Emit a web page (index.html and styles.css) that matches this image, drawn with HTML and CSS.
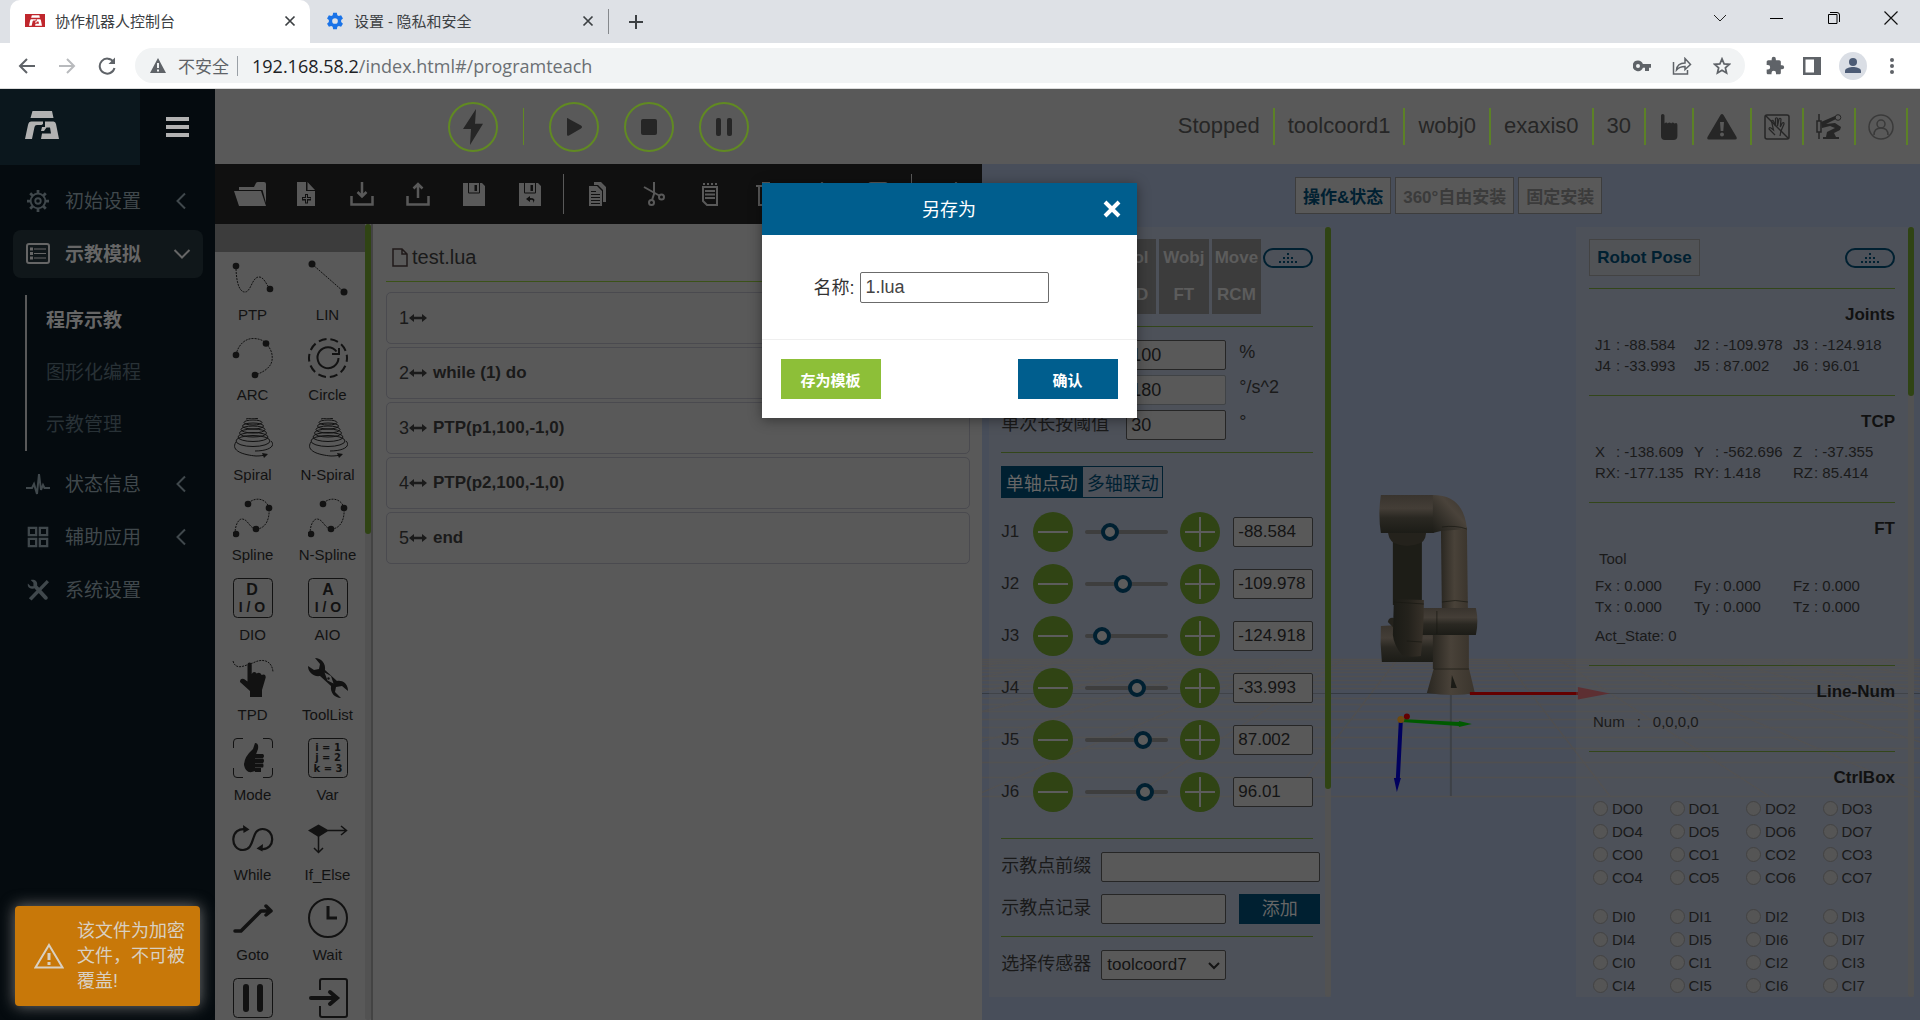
FILE: index.html
```html
<!DOCTYPE html>
<html lang="zh-CN">
<head>
<meta charset="utf-8">
<title>协作机器人控制台</title>
<link rel="stylesheet" href="styles.css">
</head>
<body>
<svg class="defs" aria-hidden="true">
  <symbol id="i-x" viewBox="0 0 12 12"><path d="M1.500 1.500 10.500 10.500M10.500 1.500 1.500 10.500" fill="none" stroke="currentColor" stroke-width="1.700"/></symbol>
  <symbol id="i-left" viewBox="0 0 12 18"><path d="M10 1.500 2.500 9l7.500 7.500" fill="none" stroke="currentColor" stroke-width="2"/></symbol>
  <symbol id="i-logo" viewBox="0 0 34 28"><path d="M7.500 0H27l1.500 7H5.500zM6.500 10.500H18V13l-1.500 1H12c-1.500 0-2.200.8-2.600 2.500L7 28H0l3-14c.6-2.500 1.500-3.500 3.500-3.500zM20 10.500h8.500q2 0 2.500 2.500l3 15H16l1-5.500h9l-1-6h-3.500L19 20h-3l1-4h3z" fill="currentColor"/></symbol>
  <symbol id="i-oval" viewBox="0 0 50 20"><rect x="1" y="1" width="48" height="18" rx="9" fill="none" stroke="currentColor" stroke-width="2"/><path d="M24 6h2M20 10h2m2 0h2m2 0h2M16 14h2m2 0h2m2 0h2m2 0h2m2 0h2" stroke="currentColor" stroke-width="2"/></symbol>
  <symbol id="i-arrow" viewBox="0 0 18 8"><path d="M0 4l5-4v2.700h8V0l5 4-5 4V5.300H5V8z" fill="currentColor"/></symbol>
  <symbol id="i-spiral" viewBox="0 0 40 40"><g fill="none" stroke="currentColor" stroke-width="1"><path d="M13 1c3-1 8-1 12-.3"/><ellipse cx="20" cy="4.500" rx="9" ry="2.500"/><ellipse cx="20" cy="8" rx="10.500" ry="3"/><ellipse cx="20" cy="11.500" rx="12" ry="3.500"/><ellipse cx="20" cy="15" rx="13.500" ry="4"/><ellipse cx="20" cy="19" rx="15" ry="4.500"/><ellipse cx="20" cy="23" rx="17" ry="5.500"/><path d="M3 24c-6 9 8 13 20 14 4 0 8-.5 11-1.500M38 23c5 5-2 10-16 10"/></g><path d="M29 35l6 1-4 4z" fill="currentColor"/></symbol>
  <symbol id="i-spline" viewBox="0 0 40 40"><path d="M2 36C2 28 5 21 9 21c6 0 8 10 14 10C32 31 37 22 36 10 33-1 20-1 15 6" fill="none" stroke="currentColor" stroke-dasharray="2 1"/><g fill="currentColor"><circle cx="3" cy="36" r="3.300"/><circle cx="23" cy="31" r="3.300"/><circle cx="36" cy="10" r="3.300"/><circle cx="15" cy="6" r="3.300"/></g></symbol>
  <symbol id="i-floppy" viewBox="0 0 24 24"><path fill-rule="evenodd" d="M1 1h19l3 3v20H1zm5 0v9c0 1 .5 1.500 1.500 1.500h9c1 0 1.500-.5 1.500-1.500V1h-1v9.500H7V1zM12.500 3v6H15V3z" fill="currentColor"/></symbol>
  <symbol id="i-minus" viewBox="0 0 40 40"><path d="M5 20h30" stroke="currentColor" stroke-width="2"/></symbol>
  <symbol id="i-plus" viewBox="0 0 40 40"><path d="M5 20h30M20 5v30" stroke="currentColor" stroke-width="2"/></symbol>
</svg>

<div class="browser">
  <div class="tabstrip">
    <div class="tab tab-active">
      <span class="favicon"><svg width="13" height="11"><use href="#i-logo"/></svg></span>
      <span class="tab-title">协作机器人控制台</span>
      <button class="plain" aria-label="关闭标签页"><svg width="12" height="12"><use href="#i-x"/></svg></button>
    </div>
    <div class="tab">
      <svg class="gear" width="18" height="18" viewBox="0 0 24 24"><path fill="#1a73e8" fill-rule="evenodd" d="M9.500 1h5l.6 3.200 2 1.100 3-1.100 2.500 4.300-2.400 2.100v2.800l2.400 2.100-2.500 4.300-3-1.100-2 1.100-.6 3.200h-5l-.6-3.200-2-1.100-3 1.100-2.500-4.300 2.400-2.100v-2.800L1.400 8.500l2.500-4.300 3 1.100 2-1.100zM12 8.200a3.800 3.800 0 100 7.600 3.800 3.800 0 000-7.600z"/></svg>
      <span class="tab-title">设置 - 隐私和安全</span>
      <button class="plain" aria-label="关闭标签页"><svg width="12" height="12"><use href="#i-x"/></svg></button>
    </div>
    <span class="tab-sep"></span>
    <button class="plain newtab" aria-label="新标签页"><svg width="16" height="16" viewBox="0 0 16 16"><path d="M8 1v14M1 8h14" stroke="#3c4043" stroke-width="2"/></svg></button>
    <div class="window-controls">
      <button class="plain" aria-label="搜索标签页"><svg width="14" height="14" viewBox="0 0 14 14"><path d="M1 4l6 6 6-6" fill="none" stroke="#222"/></svg></button>
      <button class="plain" aria-label="最小化"><svg width="14" height="14" viewBox="0 0 14 14"><path d="M0 7.500h13" stroke="#000"/></svg></button>
      <button class="plain" aria-label="还原"><svg width="14" height="14" viewBox="0 0 14 14"><path d="M3 1.500h7q2.500 0 2.500 2.500v7M1.500 3.500h8.500v9h-8.500z" fill="none" stroke="#000"/></svg></button>
      <button class="plain" aria-label="关闭"><svg width="14" height="14" viewBox="0 0 14 14"><path d="M.5.5l13 13M13.500.5l-13 13" stroke="#111" stroke-width="1.200"/></svg></button>
    </div>
  </div>
  <div class="addressbar">
    <button class="plain nav" aria-label="后退"><svg width="18" height="16" viewBox="0 0 18 16"><path d="M17 8H2M9 1L2 8l7 7" fill="none" stroke="#5f6368" stroke-width="2"/></svg></button>
    <button class="plain nav" aria-label="前进"><svg width="18" height="16" viewBox="0 0 18 16"><path d="M1 8h15M9 1l7 7-7 7" fill="none" stroke="#b8babd" stroke-width="2"/></svg></button>
    <button class="plain nav" aria-label="重新加载"><svg width="18" height="18" viewBox="0 0 18 18"><path d="M15.500 5A7.500 7.500 0 1016.500 11" fill="none" stroke="#5f6368" stroke-width="2"/><path d="M17 .5V7h-6.500z" fill="#5f6368"/></svg></button>
    <div class="omnibox">
      <svg width="16" height="15" viewBox="0 0 16 15"><path fill-rule="evenodd" fill="#5f6368" d="M8 0l8 15H0zM7 5v5h2V5zm0 6.500v2h2v-2z"/></svg>
      <span class="insecure">不安全</span>
      <span class="omni-sep"></span>
      <span class="url"><b>192.168.58.2</b>/index.html#/programteach</span>
      <span class="omni-icons">
        <svg width="18" height="14" viewBox="0 0 18 14"><path fill="#5f6368" fill-rule="evenodd" d="M5 1.500a5.300 5.300 0 104.900 7.300H12V12h4V8.800h2V5H9.900A5.300 5.300 0 005 1.500zM5 5a2 2 0 110 4 2 2 0 010-4z"/></svg>
        <svg width="20" height="18" viewBox="0 0 20 18"><path d="M1.500 5v12h14v-4M4.500 13C5 8 8 6 13 6V1.500l5.500 6L13 12.500V9.500C9 9.500 7 10 4.500 13z" fill="none" stroke="#5f6368" stroke-width="1.500"/></svg>
        <svg width="18" height="18" viewBox="0 0 24 24"><path d="M12 2.500l2.800 6.600 7.100.6-5.400 4.700 1.600 7-6.100-3.700-6.100 3.700 1.600-7L2.100 9.700l7.100-.6z" fill="none" stroke="#5f6368" stroke-width="2.300"/></svg>
      </span>
    </div>
    <div class="extensions">
      <svg width="20" height="20" viewBox="0 0 24 24"><path fill="#5f6368" d="M20.500 11H19V7c0-1.100-.9-2-2-2h-4V3.500a2.500 2.500 0 00-5 0V5H4c-1.100 0-2 .9-2 2v3.800h1.500a2.700 2.700 0 010 5.400H2V20c0 1.100.9 2 2 2h3.800v-1.500a2.700 2.700 0 015.400 0V22H17c1.100 0 2-.9 2-2v-4h1.500a2.500 2.500 0 000-5z"/></svg>
      <svg width="18" height="18" viewBox="0 0 18 18"><path fill="#5f6368" fill-rule="evenodd" d="M0 0h18v18H0zM2.500 2.500v13h8.500v-13z"/></svg>
      <svg width="28" height="28" viewBox="0 0 28 28"><circle cx="14" cy="14" r="14" fill="#dadee5"/><circle cx="14" cy="10" r="4" fill="#4c5b75"/><path d="M6 21v-2c0-3 5-4 8-4s8 1 8 4v2z" fill="#4c5b75"/></svg>
      <svg width="14" height="18" viewBox="2 0 14 18"><g fill="#5f6368"><circle cx="9" cy="3" r="2"/><circle cx="9" cy="9" r="2"/><circle cx="9" cy="15" r="2"/></g></svg>
    </div>
  </div>
</div>

<div class="app">
  <aside class="sidebar">
    <div class="brand">
      <div class="logo"><svg width="34" height="28"><use href="#i-logo"/></svg></div>
      <button class="plain burger" aria-label="菜单"><svg width="24" height="20" viewBox="0 0 24 20"><path d="M0 2h23M0 10h23M0 18h23" stroke="currentColor" stroke-width="4"/></svg></button>
    </div>
    <nav class="menu">
      <a class="menu-item" href="#init"><svg class="mi" viewBox="0 0 24 24"><circle cx="12" cy="12" r="8" fill="none" stroke="currentColor" stroke-width="2"/><circle cx="12" cy="12" r="3" fill="none" stroke="currentColor" stroke-width="2"/><path d="M12 0v4m0 16v4M0 12h4m16 0h4M3.500 3.500l3 3m11 11l3 3m0-17l-3 3m-11 11l-3 3" stroke="currentColor" stroke-width="3"/></svg><span>初始设置</span><svg width="12" height="18"><use href="#i-left"/></svg></a>
      <a class="menu-item current" href="#teach"><svg class="mi" viewBox="0 0 24 22"><rect x="1" y="1" width="22" height="19" rx="2" fill="none" stroke="currentColor" stroke-width="2"/><path d="M4 6h3m-3 4.500h3M4 15h3" stroke="currentColor" stroke-width="3"/><path d="M8 6h12M8 10.500h12M8 15h12" stroke="currentColor"/></svg><span>示教模拟</span><svg width="18" height="12" viewBox="0 0 18 12"><path d="M1.500 2L9 9.500 16.500 2" fill="none" stroke="currentColor" stroke-width="2"/></svg></a>
      <div class="submenu">
        <a class="on" href="#programteach">程序示教</a>
        <a href="#graph">图形化编程</a>
        <a href="#manage">示教管理</a>
      </div>
      <a class="menu-item" href="#status"><svg class="mi" viewBox="0 0 24 22"><path d="M0 15h6l2-4 3 10L13 1l2 16 2-5 1.500 3H24" fill="none" stroke="currentColor" stroke-width="2"/></svg><span>状态信息</span><svg width="12" height="18"><use href="#i-left"/></svg></a>
      <a class="menu-item" href="#aux"><svg class="mi" viewBox="0 0 24 24"><path d="M2 2h8v8H2zM14 2h8v8h-8zM2 14h8v8H2zM14 14h8v8h-8z" fill="none" stroke="currentColor" stroke-width="2.500"/></svg><span>辅助应用</span><svg width="12" height="18"><use href="#i-left"/></svg></a>
      <a class="menu-item" href="#system"><svg class="mi" viewBox="0 0 24 24"><path d="M21.500 1L24 3.500 5 23.500 2 21zM1 5l3 3h3V4L4 1c4-1 8 1 7 6l11 12c2 2-1 5-3 3L8 10C4 12 0 9 1 5z" fill="currentColor"/></svg><span>系统设置</span></a>
    </nav>
    <div class="toast" role="alert">
      <svg width="30" height="26" viewBox="0 0 30 26"><path d="M15 2l13.500 22.500h-27z" fill="none" stroke="currentColor" stroke-width="2"/><path d="M15 10v7m0 2v3" stroke="currentColor" stroke-width="3"/></svg>
      <p>该文件为加密文件，不可被覆盖!</p>
    </div>
  </aside>

  <div class="main">
    <header class="topbar">
      <div class="run">
        <button class="round" aria-label="使能"><svg width="20" height="36" viewBox="0 0 20 34" preserveAspectRatio="none"><path d="M13 0L0 19h8L7 34 20 14h-8z" fill="currentColor"/></svg></button>
        <span class="run-sep"></span>
        <button class="round" aria-label="开始"><svg width="18" height="18" viewBox="0 0 18 18"><path d="M2 0q1 0 2 1l12 6.500q2 1.500 0 3L4 17.500q-2 1-2-1z" fill="currentColor"/></svg></button>
        <button class="round" aria-label="停止"><svg width="16" height="16"><rect width="16" height="16" rx="2" fill="currentColor"/></svg></button>
        <button class="round" aria-label="暂停"><svg width="16" height="18"><rect width="5" height="18" rx="2" fill="currentColor"/><rect x="11" width="5" height="18" rx="2" fill="currentColor"/></svg></button>
      </div>
      <div class="status">
        <span>Stopped</span><span>toolcoord1</span><span>wobj0</span><span>exaxis0</span><span>30</span>
        <span class="pic"><svg width="22" height="26" viewBox="0 0 22 26"><path d="M3 1.500Q3 0 4.700 0t1.800 1.500V9.500q1.800-2 3.200 0 1.800-2 3.400 0 1.700-2 3.300 0 3-1.500 3 1.500v11q0 4-4 4H7q-4 0-4-4z" fill="currentColor"/></svg></span>
        <span class="pic"><svg width="32" height="26" viewBox="-1 0 32 26"><path fill-rule="evenodd" d="M13.500 1q1.500-2 3 0L29.500 23q1 2.500-1.500 2.500H2q-2.500 0-1.500-2.500zM13 8l.7 9h2.600L17 8zm2 10.500a2 2 0 100 4 2 2 0 000-4z" fill="currentColor"/></svg></span>
        <span class="pic"><svg width="26" height="26" viewBox="0 0 26 26"><g fill="none" stroke="currentColor" stroke-width="1.500"><rect x="1" y="1" width="24" height="24" rx="2"/><path d="M2 2l22 22"/><path d="M11 21l-6-6q0-2 2-1l2.500 2-2-9q1-1.500 2 0l2 5V4.500q1-1.500 2 0V12l1.500-7q1-1.500 2 0l-.7 8 2-4q2-1 1.700 1l-3 7-1 5" stroke-width="1.200"/></g></svg></span>
        <span class="pic"><svg width="26" height="26" viewBox="0 0 26 26"><path d="M3 0v7M1 7h4v11H1zM3 18v7" fill="none" stroke="currentColor" stroke-width="1.500"/><path d="M5 8l14-6 1 3-10 5 9-1 6 4-1 3-6 3 2 4h3v2H7v-2h3l1-5 8-4-5-2-8 2z" fill="currentColor"/><circle cx="22" cy="3.500" r="2.800" fill="none" stroke="currentColor"/></svg></span>
        <span class="pic user"><svg width="26" height="26" viewBox="0 0 26 26"><g fill="none" stroke="currentColor" stroke-width="1.500"><circle cx="13" cy="13" r="12"/><circle cx="13" cy="10" r="4"/><path d="M6 21q0-7 7-7t7 7"/></g></svg></span>
      </div>
    </header>

    <section class="editor">
      <div class="toolbar">
        <button aria-label="打开"><svg width="32" height="24" viewBox="0 0 32 24"><path d="M5 5h15l2-4q.5-1 2-1h6q2 0 2 2v19L28.500 8H5zM0 9h27l5 15H5z" fill="currentColor"/></svg></button>
        <button aria-label="新建"><svg width="18" height="24" viewBox="0 0 18 24"><path fill-rule="evenodd" d="M0 0h9v9h9v15H0zm10.500 0L18 8h-7.500zM8 12v3H5v3.500h3v3h3v-3h3V15h-3v-3z" fill="currentColor"/><path d="M9.500 13v7.500m-3.500-4h7.500" stroke="currentColor"/></svg></button>
        <button aria-label="导入"><svg width="24" height="24" viewBox="0 0 24 24"><path d="M1.500 14v8.500h21V14M12 0v14M7.500 10l4.500 4.500 4.500-4.500" fill="none" stroke="currentColor" stroke-width="2.500"/></svg></button>
        <button aria-label="导出"><svg width="24" height="24" viewBox="0 0 24 24"><path d="M1.500 14v8.500h21V14M12 16V2M7.500 6.500L12 2l4.500 4.500" fill="none" stroke="currentColor" stroke-width="2.500"/></svg></button>
        <button aria-label="保存"><svg width="24" height="24"><use href="#i-floppy"/></svg></button>
        <button aria-label="另存为"><svg width="24" height="24" viewBox="0 0 24 24"><use href="#i-floppy" width="24" height="24"/><path d="M12 14l-4 3 4 3v-2q4-1 3 3 4-5-3-5z" fill="#101010"/></svg></button>
        <i></i>
        <button aria-label="复制"><svg width="18" height="24" viewBox="0 0 18 24"><path fill-rule="evenodd" d="M5 0h7l5 5v15h-3V8l-5-5H5zM0 4h8l5 5v15H0zm2 5v1h5V9zm0 3v1h9v-1zm0 3v1h9v-1zm0 3v1h9v-1zm0 3v1h9v-1z" fill="currentColor"/></svg></button>
        <button aria-label="剪切"><svg width="22" height="24" viewBox="0 0 22 24"><g fill="none" stroke="currentColor" stroke-width="2"><path d="M11 0v12l-2 6M1 5l16 9"/><circle cx="8.500" cy="20.500" r="2.500"/><circle cx="18.500" cy="15" r="2.500"/></g></svg></button>
        <button aria-label="粘贴"><svg width="18" height="24" viewBox="0 0 18 24"><path d="M2 5v14l4 4h10V5z" fill="none" stroke="currentColor" stroke-width="2"/><path d="M4 9h10M4 12.500h10M4 16h10M2 2h2m2 0h2m2 0h2m2 0h2" stroke="currentColor" stroke-width="2"/></svg></button>
        <button aria-label="删除"><svg width="20" height="24" viewBox="0 0 20 24"><path d="M0 4h20M6 1h8M3 5v18h14V5" fill="none" stroke="currentColor" stroke-width="2"/></svg></button>
        <button aria-label="上移"><svg width="20" height="24" viewBox="0 0 20 24"><path d="M10 24V1M3 8l7-7 7 7" fill="none" stroke="currentColor" stroke-width="2"/></svg></button>
        <button aria-label="切换"><svg width="20" height="24" viewBox="0 0 20 24"><rect x="1" y="1" width="18" height="22" rx="2" fill="none" stroke="currentColor" stroke-width="2"/></svg></button>
        <i></i>
        <button class="last" aria-label="下移"><svg width="20" height="24" viewBox="0 0 20 24"><path d="M10 24V1M3 8l7-7 7 7" fill="none" stroke="currentColor" stroke-width="2"/></svg></button>
      </div>
      <div class="workspace">
        <div class="palette">
          <div class="palette-head"></div>
          <div class="palette-grid">
            <button><svg viewBox="0 0 40 40"><path d="M3 8c0 12 2 26 9 26 6 0 7-15 14-15 5 0 7 7 11 12" fill="none" stroke="currentColor" stroke-dasharray="2 1"/><circle cx="3" cy="8" r="3.300" fill="currentColor"/><circle cx="37" cy="31" r="3.300" fill="currentColor"/></svg>PTP</button>
            <button><svg viewBox="0 0 40 40"><path d="M4 6l32 28" stroke="currentColor" stroke-dasharray="2 1"/><circle cx="4" cy="6" r="3.500" fill="currentColor"/><circle cx="36" cy="34" r="3.500" fill="currentColor"/></svg>LIN</button>
            <button><svg viewBox="0 0 40 40"><path d="M3 17C5 7 12 .5 20 .5c6 0 11 2 13 5 5 5 7 11 6 17-1 7-9 12-17 14.500" fill="none" stroke="currentColor" stroke-dasharray="2 1"/><g fill="currentColor"><circle cx="3" cy="17" r="3.300"/><circle cx="33" cy="5.500" r="3.300"/><circle cx="22" cy="37" r="3.300"/></g></svg>ARC</button>
            <button><svg viewBox="0 0 40 40"><circle cx="20" cy="20" r="19" fill="none" stroke="currentColor" stroke-width="2" stroke-dasharray="7.900 4.030" stroke-dashoffset="4"/><path d="M28.500 13.500A10.500 10.500 0 1030.500 20M31 10v6h-7" fill="none" stroke="currentColor" stroke-width="2"/></svg>Circle</button>
            <button><svg><use href="#i-spiral"/></svg>Spiral</button>
            <button><svg><use href="#i-spiral"/></svg>N-Spiral</button>
            <button><svg><use href="#i-spline"/></svg>Spline</button>
            <button><svg><use href="#i-spline"/></svg>N-Spline</button>
            <button><svg viewBox="0 0 40 40"><rect x=".5" y=".5" width="39" height="39" rx="4" fill="none" stroke="currentColor"/><text x="19" y="17" font-size="16">D</text><text x="19" y="34" font-size="14">I / O</text></svg>DIO</button>
            <button><svg viewBox="0 0 40 40"><rect x=".5" y=".5" width="39" height="39" rx="4" fill="none" stroke="currentColor"/><text x="20" y="17" font-size="16">A</text><text x="20" y="34" font-size="14">I / O</text></svg>AIO</button>
            <button><svg viewBox="0 0 40 40"><path d="M0 3c3 11 14 3 20 2 9-5 19-3 20 9" fill="none" stroke="currentColor" stroke-dasharray="2 1"/><path d="M14.500 6.500q0-2 2-2t2.200 2V16q2-3.500 5-.5 3-2 5 1.500 4-1.500 4 2.500L29 32v7H17v-6L7 24q0-4 4-3l3.500 2.500z" fill="currentColor"/></svg>TPD</button>
            <button><svg viewBox="0 0 40 40"><path fill-rule="evenodd" d="M7 0c6 0 11 5 10 12l12 11c7-1 11 4 11 10l-6-5-6 1-1 5 6 6c-6 0-11-5-10-12L12 18C5 19 0 14 0 8l6 4 5-1 1-5zM16.500 14.500l3 8 6 3-2.500-7.500z" fill="currentColor"/><circle cx="20.500" cy="20.500" r="1.200" fill="currentColor"/></svg>ToolList</button>
            <button><svg viewBox="0 0 40 40"><path d="M.5 10V4Q.5.500 4 .5h6M30 .5h6q3.500 0 3.500 3.500v6M39.500 30v6q0 3.500-3.500 3.500h-6M10 39.500H4Q.5 39.500.5 36v-6" fill="none" stroke="currentColor"/><path d="M22 5q4 0 3 6l-3 8v14q-9 4-11-6 0-8 9-16zM22 16h8q2 2 0 4h-8zM22 20.500h8q2 2 0 4.500h-8zM22 25.500h8q1 2 0 4h-8zM22 30h6v4h-6z" fill="currentColor"/></svg>Mode</button>
            <button><svg viewBox="0 0 40 40"><rect x=".5" y=".5" width="39" height="39" rx="4" fill="none" stroke="currentColor"/><g font-size="10" class="mono"><text x="20" y="13">i = 1</text><text x="20" y="23">j = 2</text><text x="20" y="34">k = 3</text></g></svg>Var</button>
            <button><svg viewBox="0 0 40 40"><path d="M14 11.500C-3.500 8-3.500 32 10 32c13 0 7-21 19.500-21 13 0 13 21-.5 20" fill="none" stroke="currentColor" stroke-width="2.200"/><path d="M10 7l6.500 4.500-6 3.500zM30 26l-6.500 4.500 6 3z" fill="currentColor"/></svg>While</button>
            <button><svg viewBox="0 0 40 40"><path d="M0 12.500L10.500 6.500 21 12.500 10.500 19z" fill="currentColor"/><path d="M20 12.500h18M33 8l5.500 4.500L33 17M10.500 18v16M6 30l4.500 4.500L15 30" fill="none" stroke="currentColor" stroke-width="1.500"/></svg>If_Else</button>
            <button><svg viewBox="0 0 40 40"><path d="M2 33h6L28 13h9M33 8l5 5-5 4" fill="none" stroke="currentColor" stroke-width="3.500" stroke-linecap="round" stroke-linejoin="round"/></svg>Goto</button>
            <button><svg viewBox="0 0 40 40"><circle cx="20" cy="20" r="19" fill="none" stroke="currentColor" stroke-width="2"/><path d="M20 8v12h9" fill="none" stroke="currentColor" stroke-width="3"/></svg>Wait</button>
            <button aria-label="Pause"><svg viewBox="0 0 40 40"><rect x=".5" y=".5" width="39" height="39" rx="4" fill="none" stroke="currentColor"/><path d="M13 9v22M27 9v22" stroke="currentColor" stroke-width="6" stroke-linecap="round"/></svg></button>
            <button aria-label="Dofile"><svg viewBox="0 0 40 40"><path d="M12 12V3q0-2 2-2h23q2 0 2 2v34q0 2-2 2H14q-2 0-2-2v-9" fill="none" stroke="currentColor" stroke-width="2"/><path d="M3 20h25M22 14l7 6-7 6" fill="none" stroke="currentColor" stroke-width="4" stroke-linecap="round"/></svg></button>
          </div>
        </div>
        <div class="scroll"><span class="thumb-palette"></span></div>
        <div class="code">
          <h2><svg width="16" height="19" viewBox="0 0 16 19"><path d="M1 1h9l5 5v12H1zM10 1v5h5" fill="none" stroke="#201a1a" stroke-width="1.500"/></svg>test.lua</h2>
          <ol>
            <li>1<svg><use href="#i-arrow"/></svg></li>
            <li>2<svg><use href="#i-arrow"/></svg><b>while (1) do</b></li>
            <li>3<svg><use href="#i-arrow"/></svg><b>PTP(p1,100,-1,0)</b></li>
            <li>4<svg><use href="#i-arrow"/></svg><b>PTP(p2,100,-1,0)</b></li>
            <li>5<svg><use href="#i-arrow"/></svg><b>end</b></li>
          </ol>
        </div>
      </div>
    </section>

    <section class="stage">
      <svg class="scene" viewBox="982 164 938 856" preserveAspectRatio="xMidYMid slice" aria-hidden="true">
        <defs>
          <linearGradient id="tubeH" x2="0" y2="1"><stop offset="0" stop-color="#39342e"/><stop offset=".35" stop-color="#443e37"/><stop offset=".6" stop-color="#2a2822"/><stop offset="1" stop-color="#1c1c17"/></linearGradient>
          <linearGradient id="tubeV"><stop offset="0" stop-color="#2a2721"/><stop offset=".5" stop-color="#494239"/><stop offset="1" stop-color="#3b352d"/></linearGradient>
          <linearGradient id="tubeD"><stop offset="0" stop-color="#1b1b16"/><stop offset=".5" stop-color="#24221c"/><stop offset="1" stop-color="#373129"/></linearGradient>
          <linearGradient id="elbow" x1="0" y1="1" x2="1" y2="0"><stop offset="0" stop-color="#1c1c17"/><stop offset=".6" stop-color="#4a433b"/><stop offset="1" stop-color="#38322b"/></linearGradient>
        </defs>
        <g stroke="#504f4f" stroke-width="1.300">
          <path d="M982 659.500h938M982 661.500h938M982 663.500h938M982 666.500h938M982 669.500h938M982 672.500h938M982 676.500h938M982 680.500h938M982 684.500h938M982 688.500h938M982 698.500h938M982 704.500h938M982 711.500h938M982 719.500h938M982 727.500h938M982 737.500h938M982 748.500h938M982 762.500h938M982 777.500h938M982 796.500h938"/>
          <path d="M1505 660l105 136M1559 660l210 136M1613 660l315 136M1667 660l420 136M1721 660l525 136M1775 660l630 136M1829 660l735 136M1883 660l840 136M1397 660l-105 136M1343 660l-210 136M1289 660l-315 136M1235 660l-420 136M1181 660l-525 136M1127 660l-630 136M1073 660l-735 136M1019 660l-840 136"/>
        </g>
        <path d="M982 693.500h938" stroke="#353a41"/>
        <path d="M1451 690v106" stroke="#3d4147" stroke-width="2"/>
        <path d="M1381 626l18-1v2h52v35h-69q-2-18-1-36z" fill="url(#tubeH)"/>
        <path d="M1393 540h29v65h-29z" fill="#1d1d17"/>
        <path d="M1388 530h38q1 9-5 13-14 6-27 0-6-4-6-13z" fill="#24221c"/>
        <path d="M1441 525l26 2 1 82h-26z" fill="url(#tubeV)"/>
        <path d="M1381 495h53v38h-53q-3-19 0-38z" fill="url(#tubeH)"/>
        <path d="M1433 495q31 0 34 34l-26 2-8 2z" fill="url(#elbow)"/>
        <path d="M1433 633h36v36h-36z" fill="url(#tubeV)"/>
        <path d="M1420 608h56q3 13 0 27h-56z" fill="url(#tubeH)"/>
        <path d="M1388 622q1-5 6-4v10z" fill="#24221c"/>
        <path d="M1394 599l30 1q0 30-3 56-12 2-19-1-8-10-9-20z" fill="url(#tubeD)"/>
        <path d="M1434 668h35l6 25q-20 4-48 0z" fill="url(#tubeV)"/>
        <path d="M1452 675l5 13h-6z" fill="#1b1b16"/>
        <path d="M1394 602l30 2M1407 641l15 1M1437 611v23M1434 669h35M1442 527q14-2 25 2M1442 602q14-3 26 0" fill="none" stroke="#191813" stroke-width=".7"/>
        <path d="M1470 693.500h109" stroke="#640000" stroke-width="3"/>
        <path d="M1578 687l32 6.500-32 6z" fill="#5f1e22"/>
        <path d="M1402 719l57 3v-1l13 3-13 3v-1l-57-4z" fill="#005a00"/>
        <path d="M1399 720h4l-3 58h1l-4 14-3-14h2z" fill="#00005e"/>
        <circle cx="1401" cy="719.500" r="3.500" fill="#6e4a10"/><circle cx="1407" cy="716.500" r="3" fill="#640000"/>
      </svg>
      <div class="mounts">
        <button class="on">操作&amp;状态</button><button>360°自由安装</button><button>固定安装</button>
      </div>
      <div class="panels">
        <div class="panel jog">
          <div class="panel-body">
            <div class="jog-head">
              <div class="jog-tabs">
                <button>Joint</button><button>Base</button><button>Tool</button><button>Wobj</button><button>Move</button>
                <button>I/O</button><button>Eaxis</button><button>TPD</button><button>FT</button><button>RCM</button>
              </div>
              <button class="plain oval" aria-label="收起"><svg width="50" height="20"><use href="#i-oval"/></svg></button>
            </div>
            <hr>
            <div class="params">
              <label for="p1">调试速度</label><input id="p1" value="100"><span>%</span>
              <label for="p2">加速度</label><input id="p2" value="180" disabled><span>°/s^2</span>
              <label for="p3">单次长按阈值</label><input id="p3" value="30"><span>°</span>
            </div>
            <hr>
            <div class="modes"><button class="on">单轴点动</button><button>多轴联动</button></div>
            <div class="joints">
              <div class="joint"><label for="j1">J1</label><button aria-label="J1 减"><svg><use href="#i-minus"/></svg></button><input type="range" aria-label="J1" min="-175" max="175" step="any" value="-88.584"><button aria-label="J1 加"><svg><use href="#i-plus"/></svg></button><input id="j1" class="num" value="-88.584"></div>
              <div class="joint"><label for="j2">J2</label><button aria-label="J2 减"><svg><use href="#i-minus"/></svg></button><input type="range" aria-label="J2" min="-265" max="85" step="any" value="-109.978"><button aria-label="J2 加"><svg><use href="#i-plus"/></svg></button><input id="j2" class="num" value="-109.978"></div>
              <div class="joint"><label for="j3">J3</label><button aria-label="J3 减"><svg><use href="#i-minus"/></svg></button><input type="range" aria-label="J3" min="-162" max="162" step="any" value="-124.918"><button aria-label="J3 加"><svg><use href="#i-plus"/></svg></button><input id="j3" class="num" value="-124.918"></div>
              <div class="joint"><label for="j4">J4</label><button aria-label="J4 减"><svg><use href="#i-minus"/></svg></button><input type="range" aria-label="J4" min="-265" max="85" step="any" value="-33.993"><button aria-label="J4 加"><svg><use href="#i-plus"/></svg></button><input id="j4" class="num" value="-33.993"></div>
              <div class="joint"><label for="j5">J5</label><button aria-label="J5 减"><svg><use href="#i-minus"/></svg></button><input type="range" aria-label="J5" min="-175" max="175" step="any" value="87.002"><button aria-label="J5 加"><svg><use href="#i-plus"/></svg></button><input id="j5" class="num" value="87.002"></div>
              <div class="joint"><label for="j6">J6</label><button aria-label="J6 减"><svg><use href="#i-minus"/></svg></button><input type="range" aria-label="J6" min="-175" max="175" step="any" value="96.01"><button aria-label="J6 加"><svg><use href="#i-plus"/></svg></button><input id="j6" class="num" value="96.01"></div>
            </div>
            <hr>
            <div class="points">
              <label for="prefix">示教点前缀</label><input id="prefix" class="wide">
              <label for="record">示教点记录</label><input id="record"><button>添加</button>
            </div>
            <hr>
            <div class="points">
              <label for="sensor">选择传感器</label><span class="select"><select id="sensor"><option>toolcoord7</option></select><svg width="12" height="8" viewBox="0 0 12 8"><path d="M1 1l5 5 5-5" fill="none" stroke="#141414" stroke-width="2"/></svg></span>
            </div>
          </div>
          <div class="scroll"><span class="thumb-jog"></span></div>
        </div>

        <div class="panel pose">
          <div class="panel-body">
            <div class="pose-head"><button class="pose-btn">Robot Pose</button><button class="plain oval" aria-label="收起"><svg width="50" height="20"><use href="#i-oval"/></svg></button></div>
            <hr>
            <h3>Joints</h3>
            <dl class="vals">
              <div><dt>J1</dt><dd>-88.584</dd></div><div><dt>J2</dt><dd>-109.978</dd></div><div><dt>J3</dt><dd>-124.918</dd></div>
              <div><dt>J4</dt><dd>-33.993</dd></div><div><dt>J5</dt><dd>87.002</dd></div><div><dt>J6</dt><dd>96.01</dd></div>
            </dl>
            <hr class="far">
            <h3>TCP</h3>
            <dl class="vals">
              <div><dt>X</dt><dd>-138.609</dd></div><div><dt>Y</dt><dd>-562.696</dd></div><div><dt>Z</dt><dd>-37.355</dd></div>
              <div><dt>RX</dt><dd>-177.135</dd></div><div><dt>RY</dt><dd>1.418</dd></div><div><dt>RZ</dt><dd>85.414</dd></div>
            </dl>
            <hr class="far">
            <h3>FT</h3>
            <p class="tool">Tool</p>
            <dl class="vals">
              <div><dt>Fx</dt><dd>0.000</dd></div><div><dt>Fy</dt><dd>0.000</dd></div><div><dt>Fz</dt><dd>0.000</dd></div>
              <div><dt>Tx</dt><dd>0.000</dd></div><div><dt>Ty</dt><dd>0.000</dd></div><div><dt>Tz</dt><dd>0.000</dd></div>
            </dl>
            <p class="act">Act_State: 0</p>
            <hr class="far">
            <h3>Line-Num</h3>
            <p class="num-row"><span>Num</span><span>:</span><span>0,0,0,0</span></p>
            <hr class="far">
            <h3>CtrlBox</h3>
            <div class="io">
              <label><input type="radio">DO0</label><label><input type="radio">DO1</label><label><input type="radio">DO2</label><label><input type="radio">DO3</label>
              <label><input type="radio">DO4</label><label><input type="radio">DO5</label><label><input type="radio">DO6</label><label><input type="radio">DO7</label>
              <label><input type="radio">CO0</label><label><input type="radio">CO1</label><label><input type="radio">CO2</label><label><input type="radio">CO3</label>
              <label><input type="radio">CO4</label><label><input type="radio">CO5</label><label><input type="radio">CO6</label><label><input type="radio">CO7</label>
            </div>
            <div class="io inputs">
              <label><input type="radio">DI0</label><label><input type="radio">DI1</label><label><input type="radio">DI2</label><label><input type="radio">DI3</label>
              <label><input type="radio">DI4</label><label><input type="radio">DI5</label><label><input type="radio">DI6</label><label><input type="radio">DI7</label>
              <label><input type="radio">CI0</label><label><input type="radio">CI1</label><label><input type="radio">CI2</label><label><input type="radio">CI3</label>
              <label><input type="radio">CI4</label><label><input type="radio">CI5</label><label><input type="radio">CI6</label><label><input type="radio">CI7</label>
            </div>
          </div>
          <div class="scroll"><span class="thumb-pose"></span></div>
        </div>
      </div>
    </section>
  </div>

  <div class="modal-layer">
    <div class="modal" role="dialog" aria-label="另存为">
      <div class="modal-head"><span>另存为</span><button class="plain" aria-label="关闭"><svg width="18" height="18" viewBox="0 0 18 18"><path d="M2 2l14 14M16 2L2 16" stroke="#fff" stroke-width="4"/></svg></button></div>
      <div class="modal-body"><label for="fname">名称:</label><input id="fname" value="1.lua"></div>
      <div class="modal-foot"><button class="green">存为模板</button><button>确认</button></div>
    </div>
  </div>
</div>
</body>
</html>
```

FILE: styles.css
```css
:root {
  --paper: #595959;
  --green: #304414;
  --blue: #002031;
  --ink: #1a1a1a;
}
* { box-sizing: border-box; }
body {
  margin: 0;
  height: 100vh;
  overflow: hidden;
  display: flex;
  flex-direction: column;
  font-family: "Liberation Sans", "Noto Sans CJK SC", sans-serif;
  font-size: 18px;
  color: var(--ink);
}
h2, h3, p, ol, dl, dd { margin: 0; padding: 0; font-weight: normal; }
button, input, select { font: inherit; color: inherit; margin: 0; padding: 0; border: 0; }
svg { display: block; flex: none; }
.defs { position: absolute; width: 0; height: 0; }
.plain { background: none; display: grid; place-items: center; }

/* browser frame */
.browser { font-family: "Open Sans", "Noto Sans CJK SC", sans-serif; color: #3c4043; border-bottom: 1px solid #dcdcdc; }
.tabstrip { display: flex; align-items: center; height: 43px; background: #dee1e6; padding-left: 10px; }
.tab { display: flex; align-items: center; width: 298px; height: 43px; padding: 0 14px 2px 16px; font-size: 15px; }
.tab-active { width: 300px; padding-left: 15px; background: #fff; border-radius: 10px 10px 0 0; }
.favicon { width: 20px; height: 13px; background: #c0272d; color: #fff; display: grid; place-items: center; margin-right: 10px; }
.gear { margin-right: 10px; }
.tab-title { flex: 1; padding-bottom: 1px; }
.tab-sep { width: 1px; height: 25px; background: #85888c; }
.newtab { width: 54px; height: 43px; color: #3c4043; }
.window-controls { display: flex; margin: 0 1px 7px auto; }
.window-controls button { width: 57px; height: 36px; }
.addressbar { display: flex; align-items: center; height: 45px; background: #fff; padding: 0 21px 0 7px; }
.nav { width: 40px; height: 36px; }
.omnibox { flex: 1; display: flex; align-items: center; height: 35px; margin-left: 8px; padding: 0 14px 0 15px; border-radius: 18px; background: #f1f3f4; color: #5f6368; font-size: 17px; }
.insecure { margin: 0 8px 0 12px; }
.omni-sep { width: 1px; height: 20px; background: #9aa0a6; margin-right: 14px; }
.url { color: #6b6f73; font-size: 18px; }
.url b { font-weight: normal; color: #202124; }
.omni-icons { margin-left: auto; display: flex; align-items: center; gap: 21px; }
.extensions { display: flex; align-items: center; gap: 18px; padding-left: 20px; }

/* application shell */
.app { position: relative; flex: 1; min-height: 0; display: grid; grid-template-columns: 215px 1fr; background: var(--paper); }
.sidebar { display: flex; flex-direction: column; min-height: 0; background: #050b0f; color: #40484c; }
.brand { display: flex; height: 76px; color: #b2b2b2; }
.logo { width: 140px; background: #0b171d; padding: 22px 0 0 25px; }
.burger { flex: 1; align-content: start; padding-top: 28px; }
.menu { padding: 12px 12px 0 13px; }
.menu a { text-decoration: none; color: inherit; font-size: 19px; }
.menu-item { display: flex; align-items: center; height: 48px; margin-bottom: 5px; padding: 0 16px 0 13px; border-radius: 8px; }
.mi { width: 24px; height: 22px; margin-right: 15px; }
.menu-item span { flex: 1; padding-bottom: 3px; }
.menu .current { background: #10171a; color: #666; font-weight: bold; padding-right: 12px; }
.submenu { margin: 17px 0 9px 12px; padding-left: 19px; border-left: 2px solid #595959; color: #283136; }
.submenu a { display: block; height: 52px; line-height: 52px; }
.submenu .on { color: #666; font-weight: bold; }
.toast { display: flex; align-items: center; gap: 13px; height: 100px; margin: auto 15px 14px; padding: 0 12px 0 19px; border-radius: 4px; background: #c87809; color: #d9d0c2; box-shadow: 0 0 15px #767676; line-height: 25px; }

.main { min-width: 0; min-height: 0; display: grid; grid-template: 75px minmax(0, 1fr) / 9fr 11fr; }
.topbar { grid-column: 1 / -1; display: flex; justify-content: space-between; align-items: center; padding: 0 12px 0 233px; color: #262626; }
.run { display: flex; align-items: center; gap: 25px; }
.round { width: 50px; height: 50px; border: 2px solid #618a22; border-radius: 50%; background: none; display: grid; place-items: center; }
.run-sep { width: 1px; height: 37px; background: #618a22; }
.status { display: flex; font-size: 22px; }
.status span { height: 37px; line-height: 35px; padding: 0 13px; border-right: 2px solid #5c8126; }
.status .pic { padding: 6px 12px; }
.status .user { color: #3a3a3a; }

/* editor */
.editor { display: flex; flex-direction: column; min-width: 0; min-height: 0; }
.toolbar { display: flex; align-items: center; height: 60px; padding: 0 5px 0 7px; background: #101010; color: #595959; overflow: hidden; }
.toolbar button { width: 56px; height: 40px; flex: none; background: none; display: grid; place-items: center; }
.toolbar i { flex: none; width: 1px; height: 40px; margin: 0 6px 0 5px; background: #595959; }
.toolbar .last { margin-left: 10px; }
.workspace { flex: 1; min-height: 0; display: flex; }
.palette { width: 150px; overflow: hidden; }
.palette-head { height: 28px; background: #3c3c3c; }
.palette-grid { display: grid; grid-template-columns: 1fr 1fr; grid-auto-rows: 80px; }
.palette-grid button { display: flex; flex-direction: column; align-items: center; gap: 7px; padding: 6px 0 0; background: none; font-size: 15px; line-height: 20px; color: #121212; }
.palette-grid svg { width: 40px; height: 40px; overflow: visible; }
.palette-grid text { font-weight: bold; text-anchor: middle; fill: currentColor; font-family: "Liberation Sans", sans-serif; }
.palette-grid .mono text { font-family: "DejaVu Sans", sans-serif; }
.scroll { width: 6px; flex: none; background: #525252; border-radius: 3px; }
.scroll span { display: block; background: var(--green); border-radius: 3px; }
.thumb-palette { height: 39%; }
.thumb-jog { height: 73%; }
.thumb-pose { height: 22%; }
.code { flex: 1; border-left: 2px solid #434343; padding: 14px 12px 0 13px; }
.code h2 { display: flex; align-items: center; gap: 4px; height: 44px; padding: 0 0 5px 6px; border-bottom: 1px solid #3b5218; font-size: 20px; line-height: 36px; }
.code ol { list-style: none; display: flex; flex-direction: column; gap: 3px; margin-top: 10px; }
.code li { display: flex; align-items: center; height: 52px; padding-left: 12px; border: 1px solid #4a4a4f; border-radius: 5px; }
.code li svg { width: 18px; height: 8px; margin-right: 6px; }
.code b { font-size: 17px; }

/* 3D stage */
.stage { position: relative; min-width: 0; min-height: 0; display: flex; flex-direction: column; background: #484e5a; }
.scene { position: absolute; inset: 0; width: 100%; height: 100%; }
.mounts { position: relative; display: flex; justify-content: center; gap: 4px; margin-top: 13px; padding-right: 5px; }
.mounts button { height: 37px; padding: 0 7px; border: 1px solid #3d3d3d; background: var(--paper); font-weight: bold; font-size: 17px; color: #3b3b3b; }
.mounts .on { color: var(--blue); }
.panels { position: relative; flex: 1; min-height: 0; display: flex; justify-content: space-between; margin: 13px 6px 23px 7px; }
.panel { display: flex; background: rgba(89, 89, 89, .3); }
.panel-body { overflow: hidden; flex: 1; min-width: 0; }
.jog { width: 342px; }
.jog .panel-body { padding: 12px 5px 0 12px; }
.pose { width: 338px; }
.pose .panel-body { padding: 12px 13px 0; }
hr { height: 1px; border: 0; background: #33461a; margin: 12px 0 13px; }
.jog hr { margin-right: 7px; }
.oval { color: var(--blue); height: 20px; width: 50px; }
.jog-head { display: flex; gap: 2px; }
.jog-head .oval, .pose-head .oval { margin-top: 9px; }
.jog-tabs { display: grid; grid-template: 37px 38px / repeat(5, 1fr); column-gap: 3px; width: 260px; }
.jog-tabs button { background: #3c3c3c; color: #5c5c5c; font-weight: bold; font-size: 17px; }
.jog input:not([type=range]), .jog select { height: 30px; border: 1px solid #262626; border-radius: 2px; background: var(--paper); color: #141414; padding: 0 4px; min-width: 0; width: 100%; }
.jog .params input:disabled { border-color: #404346; }
.params { display: grid; grid-template-columns: 125px 100px 1fr; row-gap: 5px; line-height: 28px; }
.params span { padding-left: 13px; line-height: 24px; }
.params label { white-space: nowrap; }
.modes { display: flex; }
.modes button { width: 81px; height: 32px; border: 1px solid var(--blue); background: none; color: var(--blue); }
.modes .on { background: var(--blue); color: #666; }
.joints { margin: 8px 7px 20px 0; }
.joint { display: grid; grid-template-columns: 32px 40px 107px 40px 93px; align-items: center; height: 52px; font-size: 17px; }
.joint button { width: 40px; height: 40px; border-radius: 50%; background: var(--green); color: #5c5c5c; }
.joint button svg { width: 40px; height: 40px; }
.jog .joint .num { width: 80px; justify-self: end; }
input[type=range] { appearance: none; width: 83px; height: 18px; justify-self: center; background: none; }
input[type=range]::-webkit-slider-runnable-track { height: 4px; border-radius: 2px; background: #3e3e3e; }
input[type=range]::-webkit-slider-thumb { appearance: none; width: 18px; height: 18px; margin-top: -7px; border: 4px solid var(--blue); border-radius: 50%; background: #5c5c5c; }
.points { display: grid; grid-template-columns: 100px 125px 94px; row-gap: 12px; line-height: 28px; }
.points .wide { grid-column: 2 / 4; }
.points button { margin-left: 13px; background: var(--blue); color: #666; }
.select { position: relative; }
.select svg { position: absolute; right: 6px; top: 12px; }
.jog select { appearance: none; padding: 0 5px; font-size: 17px; }

.pose-head { display: flex; justify-content: space-between; }
.pose-btn { width: 111px; height: 37px; border: 1px solid #434343; background: #515356; color: var(--blue); font-weight: bold; font-size: 17px; }
.pose h3 { font-size: 17px; font-weight: bold; line-height: 26px; text-align: right; margin-bottom: 6px; color: #111; }
.pose { font-size: 15px; line-height: 21px; }
.pose hr.far { margin-top: 19px; }
.vals { display: grid; grid-template-columns: repeat(3, 99px); padding-left: 6px; }
.vals div { display: flex; }
.vals dt { width: 21px; white-space: nowrap; }
.vals dd::before { content: ": "; }
.tool { padding-left: 10px; margin-bottom: 6px; }
.act { padding: 8px 0 0 6px; }
.num-row { display: flex; gap: 12px; padding-left: 4px; }
.io { display: grid; grid-template-columns: repeat(4, 1fr); line-height: 23px; padding-left: 4px; margin: 0 -4px 0 0; }
.io.inputs { margin-top: 16px; }
.io label { display: flex; align-items: center; gap: 4px; }
.io input { appearance: none; width: 15px; height: 15px; border: 1px solid #434343; border-radius: 50%; background: #555; }

/* save-as dialog */
.modal-layer { position: absolute; left: 0; right: 22px; top: 94px; display: flex; justify-content: center; pointer-events: none; }
.modal { width: 375px; background: #fff; color: #333; box-shadow: 0 2px 12px rgba(0, 0, 0, .4); pointer-events: auto; }
.modal-head { display: grid; grid-template-columns: 50px 1fr 50px; align-items: center; height: 52px; background: #005e8e; color: #fff; text-align: center; }
.modal-head span { grid-column: 2; padding-bottom: 2px; }
.modal-head button { width: 50px; }
.modal-body { display: flex; align-items: center; gap: 5px; padding: 37px 52px 36px; border-bottom: 1px solid #efefef; }
.modal-body label { padding-bottom: 3px; }
.modal-body input { width: 189px; height: 31px; padding: 0 5px; border: 1px solid #6b6b6b; border-radius: 2px; color: #444; }
.modal-foot { display: flex; justify-content: space-between; padding: 19px; }
.modal-foot button { width: 100px; height: 40px; background: #005e8e; color: #fff; font-size: 15px; font-weight: bold; }
.modal-foot .green { background: #8dbf38; }
```
